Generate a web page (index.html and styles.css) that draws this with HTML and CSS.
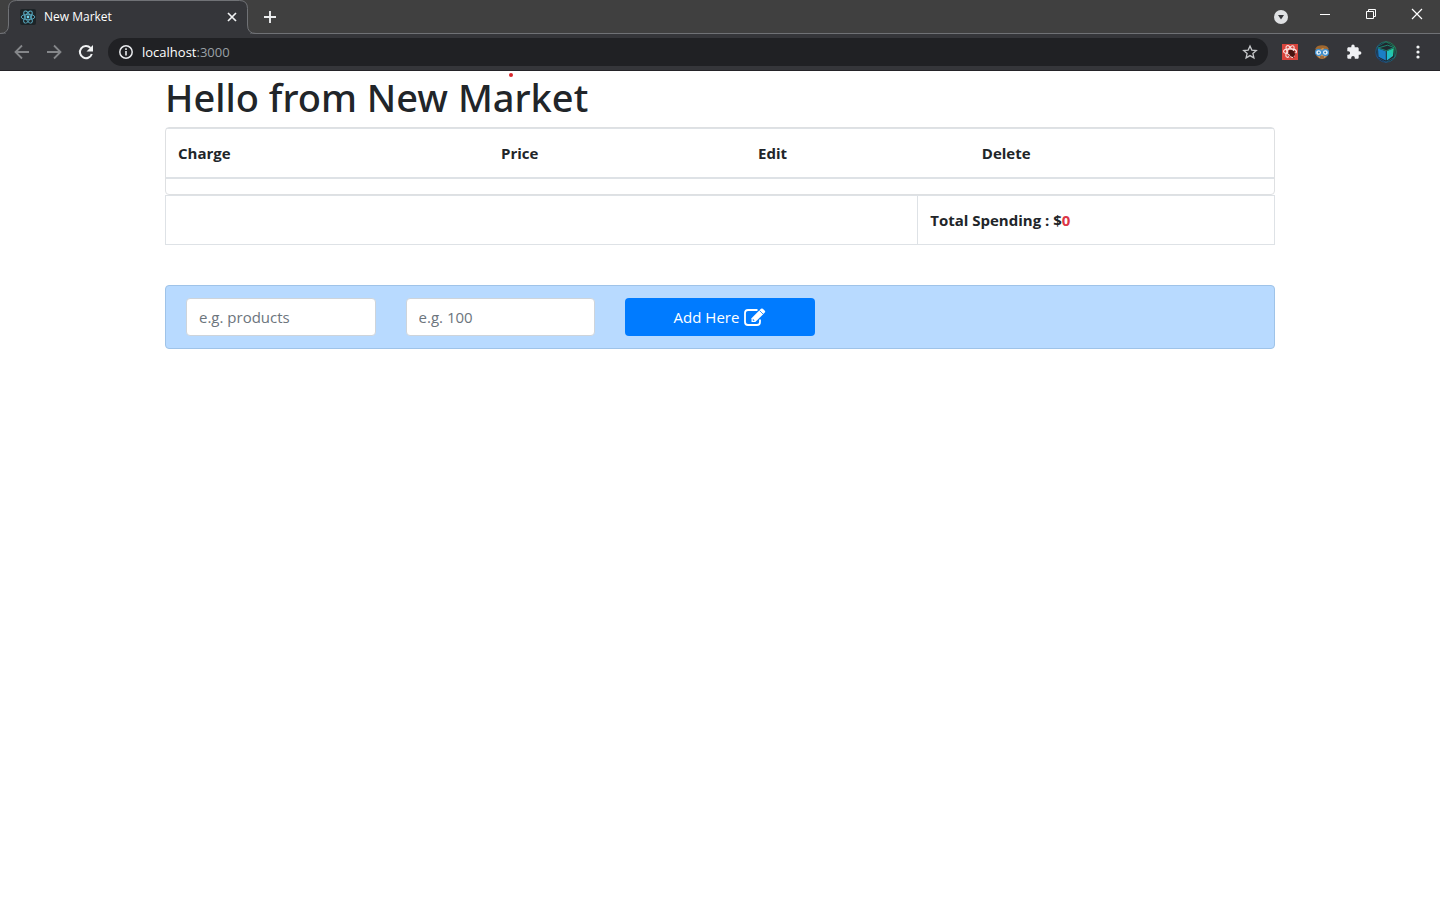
FILE: index.html
```html
<!DOCTYPE html>
<html lang="en">
<head>
<meta charset="utf-8">
<title>New Market</title>
<link rel="stylesheet" href="styles.css">
</head>
<body>
<header class="browser">
  <div class="tabstrip">
    <div class="tab">
      <svg class="tab-shape" width="256" height="34" viewBox="0 0 256 34" aria-hidden="true"><path d="M0 33.5Q8.500 33.500 8.500 25V8.500Q8.500 .5 16.500 .5H239.500Q247.500 .5 247.500 8.500V25Q247.500 33.500 256 33.500" fill="#35363a" stroke="#707276"/><path d="M0 33.500H256" stroke="#35363a" stroke-dasharray="244" stroke-dashoffset="-6"/></svg>
      <svg class="favicon" width="16" height="16" viewBox="0 0 16 16" aria-hidden="true"><rect width="16" height="16" rx="2" fill="#1d2427"/><g fill="none" stroke="#5aaec6" stroke-width=".9"><ellipse cx="8" cy="8" rx="6.800" ry="2.700"/><ellipse cx="8" cy="8" rx="6.800" ry="2.700" transform="rotate(60 8 8)"/><ellipse cx="8" cy="8" rx="6.800" ry="2.700" transform="rotate(120 8 8)"/></g><circle cx="8" cy="8" r="1.400" fill="#70d5ee"/></svg>
      <span class="tab-title">New Market</span>
      <button class="icon-btn tab-close" aria-label="Close tab"><svg width="16" height="16" viewBox="0 0 16 16"><path d="M4 4l8 8M12 4l-8 8" stroke="#f1f3f4" stroke-width="1.700"/></svg></button>
    </div>
    <button class="icon-btn new-tab" aria-label="New tab"><svg width="16" height="16" viewBox="0 0 16 16"><path d="M8 2v12M2 8h12" stroke="#eceeef" stroke-width="1.900"/></svg></button>
    <div class="window-controls">
      <button class="icon-btn search-tabs" aria-label="Search tabs"><svg width="16" height="16" viewBox="0 0 16 16"><circle cx="8" cy="8" r="7" fill="#dfe1e3"/><path d="M5 6h6L8 10.500z" fill="#35363a"/></svg></button>
      <button class="icon-btn win-btn" aria-label="Minimize"><svg width="12" height="12" viewBox="0 0 12 12"><path d="M1 6.500h10" stroke="#fff"/></svg></button>
      <button class="icon-btn win-btn" aria-label="Restore"><svg width="12" height="12" viewBox="0 0 12 12" fill="none" stroke="#fff"><path d="M1.500 3.500h7v7h-7zM3.500 3.500v-2h7v7h-2"/></svg></button>
      <button class="icon-btn win-btn" aria-label="Close"><svg width="12" height="12" viewBox="0 0 12 12"><path d="M1 1l10 10M11 1L1 11" stroke="#fff" stroke-width="1.200"/></svg></button>
    </div>
  </div>
  <div class="toolbar">
    <nav class="nav-buttons">
      <button class="icon-btn" aria-label="Back"><svg width="16" height="16" viewBox="0 0 16 16" fill="none" stroke="#85878a" stroke-width="1.800"><path d="M15 8H2M8 1.500L1.500 8 8 14.500"/></svg></button>
      <button class="icon-btn" aria-label="Forward"><svg width="16" height="16" viewBox="0 0 16 16" fill="none" stroke="#85878a" stroke-width="1.800"><path d="M1 8h13M8 1.500L14.500 8 8 14.500"/></svg></button>
      <button class="icon-btn" aria-label="Reload"><svg width="16" height="16" viewBox="0 0 16 16"><path d="M13.800 10A6.100 6.100 0 1 1 12.500 3.900" fill="none" stroke="#f1f3f4" stroke-width="2"/><path d="M15 1v6.500H8.500z" fill="#f1f3f4"/></svg></button>
    </nav>
    <div class="omnibox">
      <svg width="16" height="16" viewBox="0 0 16 16" aria-hidden="true"><circle cx="8" cy="8" r="6.200" fill="none" stroke="#e8eaed" stroke-width="1.500"/><path d="M8 7v4.500M8 4.300V6" stroke="#e8eaed" stroke-width="1.600"/></svg>
      <span class="url">localhost<span class="port">:3000</span></span>
      <button class="icon-btn" aria-label="Bookmark this page"><svg width="16" height="16" viewBox="0 0 16 16"><path d="M8 2l1.800 4.100 4.500.4-3.400 3 1 4.400L8 11.600l-3.900 2.300 1-4.400-3.400-3 4.500-.4z" fill="none" stroke="#c6c8ca" stroke-width="1.300"/></svg></button>
    </div>
    <div class="extensions">
      <button class="icon-btn" aria-label="React tools"><svg width="16" height="16" viewBox="0 0 16 16"><rect width="16" height="16" fill="#d9453d"/><g fill="none" stroke="#fbe3e1" stroke-width="1.100"><ellipse cx="8" cy="7.500" rx="6.500" ry="2.600"/><ellipse cx="8" cy="7.500" rx="6.500" ry="2.600" transform="rotate(60 8 7.500)"/><ellipse cx="8" cy="7.500" rx="6.500" ry="2.600" transform="rotate(120 8 7.500)"/></g><ellipse cx="9.800" cy="9.300" rx="2.700" ry="3.600" transform="rotate(-35 9.800 9.300)" fill="#4a1310"/><path d="M6 9.500l7-2.500M7 12.500l6.500-3M7 6l5 8" stroke="#4a1310" stroke-width=".9"/></svg></button>
      <button class="icon-btn" aria-label="Profile helper"><svg width="16" height="16" viewBox="0 0 16 16"><path d="M1.500 4.500Q3 1.200 8 1.200T14.500 4.500L14 11Q12 15 8 15T2 11z" fill="#a0682f"/><path d="M3 7l6-3 4 3v4.500Q11 14.300 8 14.300T3 11.500z" fill="#d19a5c"/><circle cx="4.600" cy="8.500" r="3" fill="#eef6fb" stroke="#3d8fd0" stroke-width="1.300"/><circle cx="11.400" cy="8.500" r="3" fill="#eef6fb" stroke="#3d8fd0" stroke-width="1.300"/><circle cx="4.800" cy="8.500" r="1" fill="#2f79ae"/><circle cx="11.200" cy="8.500" r="1" fill="#2f79ae"/><path d="M6 13h4" stroke="#714020"/></svg></button>
      <button class="icon-btn" aria-label="Extensions"><svg width="16" height="16" viewBox="0 0 16 16"><path d="M13.700 7.300h-1V4.700c0-.8-.6-1.400-1.400-1.400H8.700v-1a1.700 1.700 0 0 0-3.400 0v1H2.600c-.7 0-1.300.6-1.300 1.400v2.500h1a1.800 1.800 0 0 1 0 3.600h-1v2.600c0 .7.600 1.300 1.300 1.300h2.600v-1a1.800 1.800 0 0 1 3.600 0v1h2.500c.8 0 1.400-.6 1.400-1.300v-2.700h1a1.700 1.700 0 0 0 0-3.400z" fill="#eff0f3"/></svg></button>
      <button class="icon-btn avatar" aria-label="Profile"><svg width="22" height="22" viewBox="0 0 22 22"><defs><linearGradient id="ring" x1="1" y1="0" x2="0" y2="1"><stop offset="0" stop-color="#1fae55"/><stop offset=".5" stop-color="#187f94"/><stop offset="1" stop-color="#1c4fb0"/></linearGradient><linearGradient id="right" x1="0" y1="1" x2="1" y2="0"><stop offset="0" stop-color="#1fb4e6"/><stop offset="1" stop-color="#25d08a"/></linearGradient></defs><circle cx="11" cy="11" r="10.300" fill="#20262c" stroke="url(#ring)" stroke-width=".6"/><path d="M11 .8l8.800 5v10.400L11 21.200l-8.800-5V5.800z" fill="none" stroke="url(#ring)" stroke-width=".6"/><path d="M3 7l9.500-2.800L19 6.500l-7.500 3.200z" fill="#202a30" stroke="#1d9c80" stroke-width=".8"/><path d="M3 7.500l7.800 2.800v9.200L3.500 15.800z" fill="#1b7fc6"/><path d="M11.800 10.300L18.800 7.200 18 15l-6.200 4.500z" fill="url(#right)"/></svg></button>
      <button class="icon-btn" aria-label="Menu"><svg width="16" height="16" viewBox="0 0 16 16" fill="#f1f3f4"><circle cx="8" cy="3" r="1.600"/><circle cx="8" cy="8" r="1.600"/><circle cx="8" cy="13" r="1.600"/></svg></button>
    </div>
  </div>
</header>
<main class="container">
  <h1 class="title">Hello from New M<span class="marked">a<i class="dot"></i></span>rket</h1>
  <div class="card">
    <table class="charges">
      <thead><tr><th class="col-charge" scope="col">Charge</th><th class="col-price" scope="col">Price</th><th class="col-edit" scope="col">Edit</th><th scope="col">Delete</th></tr></thead>
      <tbody></tbody>
    </table>
  </div>
  <table class="totals">
    <tbody><tr><td class="col-blank"></td><th scope="row">Total Spending : $<span class="amount">0</span></th></tr></tbody>
  </table>
  <form class="add-form">
    <input class="field" type="text" aria-label="Charge" placeholder="e.g. products">
    <input class="field" type="text" aria-label="Price" placeholder="e.g. 100">
    <button class="submit" type="button">Add Here <svg width="22" height="18" viewBox="0 0 22 18" aria-hidden="true"><path d="M13.500 2H4Q1 2 1 5v9q0 3 3 3h9q3 0 3-3v-2.500" fill="none" stroke="#fff" stroke-width="1.800"/><path d="M7.500 10.200L17 .8q.9-.8 1.800 0l2 2q.8.900 0 1.800L11.300 14H7.500z" fill="#fff"/><path d="M15.500 2.500l3.500 3.500" stroke="#007bff" stroke-width=".8"/><path d="M8.800 10.800v1.900h1.900z" fill="#007bff"/></svg></button>
  </form>
</main>
</body>
</html>
```
FILE: styles.css
```css
*, *::before, *::after { box-sizing: border-box; }
body {
  margin: 0;
  background: #fff;
  color: #212529;
  font: 15px/24px "Open Sans", "Noto Sans", sans-serif;
}
svg { display: block; }
table { border-collapse: separate; border-spacing: 0; width: 100%; table-layout: fixed; }
th, td { padding: 12px; text-align: left; }
button, input { font: inherit; }

.browser { font-size: 12px; color: #fff; }
.icon-btn {
  display: flex;
  align-items: center;
  justify-content: center;
  padding: 0;
  border: 0;
  background: none;
}
.tabstrip {
  display: flex;
  align-items: center;
  height: 34px;
  background: #404040;
  border-bottom: 1px solid #707276;
}
.tab {
  position: relative;
  display: flex;
  align-items: center;
  gap: 8px;
  width: 256px;
  height: 34px;
  padding: 0 24px 0 20px;
}
.tab-shape { position: absolute; left: 0; top: 0; }
.favicon, .tab-title, .tab-close { position: relative; }
.tab-title { flex: 1; }
.tab-close { margin-right: -8px; }
.new-tab { margin-left: 6px; }
.window-controls { display: flex; align-items: center; height: 28px; margin: 0 0 5px auto; }
.search-tabs { margin: 5px 13px 0 0; }
.win-btn { width: 46px; height: 28px; }

.toolbar {
  display: flex;
  align-items: center;
  gap: 14px;
  height: 37px;
  padding: 0 14px;
  background: #35363a;
  border-bottom: 1px solid #242328;
}
.nav-buttons, .extensions { display: flex; align-items: center; gap: 16px; }
.avatar { margin: 0 -3px; }
.omnibox {
  flex: 1;
  display: flex;
  align-items: center;
  gap: 8px;
  height: 28px;
  padding: 0 10px;
  border-radius: 14px;
  background: #202124;
}
.url { flex: 1; font-size: 13px; }
.port { color: #9aa0a6; }

.container { max-width: 1110px; margin: 0 auto; }
.title { margin: 0; padding: 2px 0 6px; font-family: "Noto Sans", "Open Sans", sans-serif; font-size: 38px; line-height: 48px; font-weight: 500; }
.marked { position: relative; }
.dot {
  position: absolute;
  left: 16px;
  top: 2px;
  width: 4px;
  height: 4px;
  border-radius: 50%;
  background: #d9262c;
}
.card { border: 1px solid #dee0e2; border-radius: 4px; padding-bottom: 15px; }
.charges th { border-top: 1px solid #dee2e6; border-bottom: 2px solid #dee2e6; }
.col-charge { width: 29.15%; }
.col-price { width: 23.2%; }
.col-edit { width: 20.2%; }
.totals { border: 1px solid #dee2e6; }
.totals th { border-left: 1px solid #dee2e6; }
.col-blank { width: 67.8%; }
.amount { color: #dc3545; }
.add-form {
  display: grid;
  grid-template-columns: repeat(5, 1fr);
  gap: 30px;
  margin-top: 40px;
  padding: 12px 20px;
  border: 1px solid #9fc3e8;
  border-radius: 4px;
  background: #b8daff;
}
.field {
  width: 100%;
  min-width: 0;
  height: 38px;
  padding: 6px 12px;
  border: 1px solid #ced4da;
  border-radius: 4px;
  background: #fff;
  color: #495057;
}
.field::placeholder { color: #6c757d; opacity: 1; }
.submit {
  display: flex;
  align-items: center;
  justify-content: center;
  gap: 5px;
  height: 38px;
  padding: 0;
  border: 0;
  border-radius: 4px;
  background: #007bff;
  color: #fff;
}
```
